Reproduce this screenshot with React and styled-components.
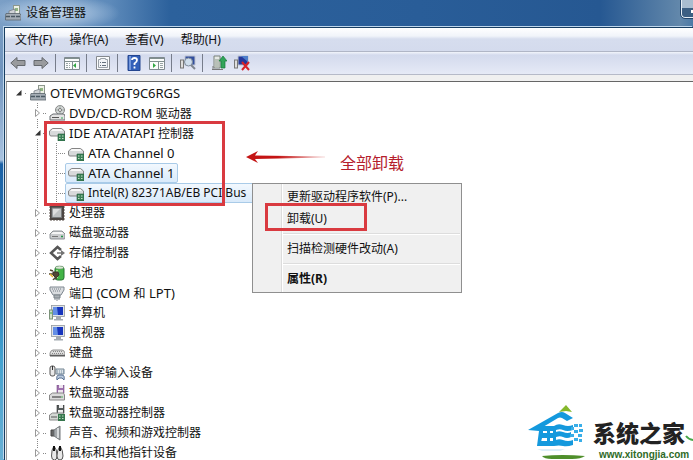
import React from "react";
import styled, { createGlobalStyle, css } from "styled-components";

const Global = createGlobalStyle`
  * { box-sizing: border-box; }
  body { margin: 0; overflow: hidden; }
  body, button { font: 12px/20px "Noto Sans", "Noto Sans CJK SC", sans-serif; color: #111; }
  button { background: none; border: 0; padding: 0; text-align: left; white-space: nowrap; }
`;
const Desktop = styled.div`
  position: relative;
  height: 100vh;
  overflow: hidden;
  display: flex;
  flex-direction: column;
  padding-left: 4px;
  background: linear-gradient(180deg, #7fa3c8 0, #6f93bd 70px, #a9c3e0 160px, #1c62a6 164px, #2f87c0 300px, #45a3d0 360px, #6ab0d4 100%);
`;
const TitleBar = styled.header`
  height: 27px;
  flex: none;
  margin-left: -4px;
  padding: 0 0 1px 5px;
  display: flex;
  align-items: center;
  gap: 5px;
  background:
    radial-gradient(ellipse 65px 18px at 55px 13px, rgba(225, 236, 247, .75), rgba(190, 212, 235, .45) 60%, transparent),
    linear-gradient(90deg, #7b9fc6 0, #5d8aba 110px, #2c619c 170px, #295d98 420px, #265892 600px, #6388ab 680px, #4c7aa6 100%);
`;
const Title = styled.h1`margin: 0; font-size: 12px; font-weight: 400; line-height: 20px;`;
const Minimize = styled.button`
  width: 12px;
  height: 18px;
  margin: 0 0 0 auto;
  align-self: flex-start;
  border: solid #e6eef5;
  border-width: 0 0 1px 1px;
  border-radius: 0 0 0 4px;
  outline: 1px solid #24466b;
  background: linear-gradient(#a9bdd0 0 8px, #3c5f83 8px);
  &::after { content: ""; display: block; width: 2px; height: 3px; margin: 5px 0 0 9px; background: #fff; }
`;
const Window = styled.main`
  flex: 1;
  min-height: 0;
  display: flex;
  flex-direction: column;
  border-left: 1px solid #173d61;
  border-top: 1px solid #173d61;
  box-shadow: -1px -1px #bfd7ec;
  background: #f0f0f0;
`;
const MenuBar = styled.nav`
  height: 24px;
  flex: none;
  display: flex;
  align-items: center;
  gap: 17px;
  padding-left: 10px;
  background: linear-gradient(#fff 0, #f1f4fa 8px, #d6ddee 11px, #d4dbed 100%);
  border-bottom: 1px solid #b0b6c6;
`;
const ToolBar = styled.div`
  height: 23px;
  flex: none;
  display: flex;
  align-items: center;
  padding-left: 5px;
  background: linear-gradient(#f2f5fb 0, #d3daed 3px, #dfe4f3 70%, #e6eaf6);
  border-bottom: 1px solid #b6bac8;
  svg { display: block; }
`;
const Tool = styled.button`width: 16px; height: 16px; margin-right: ${(p) => p.$gap || 0}px;`;
const Divider = styled.span`width: 1px; height: 18px; background: #777d8b; margin-right: 8px;`;
const Pane = styled.section`
  flex: 1;
  min-height: 0;
  overflow: hidden;
  margin: 6px 0 0 1px;
  border-top: 1px solid #666;
  border-left: 1px solid #999;
  background: #fff;
`;
const Tree = styled.ul`list-style: none; margin: 0; padding: 0;`;
const RootTree = styled(Tree)`padding-top: 1px;`;
const Dots = css`background-image: linear-gradient(#888 1px, transparent 1px); background-size: 1px 2px; background-repeat: repeat-y;`;
const Branch = styled(Tree)`
  ${Dots}
  background-position: ${(p) => p.$line}px 0;
`;
const Row = styled.li`
  height: 20px;
  display: flex;
  align-items: center;
  padding-left: ${(p) => p.$pad}px;
`;
const Twisty = styled.button`
  width: 8px;
  height: 10px;
  flex: none;
  background: #fff;
  margin-right: ${(p) => p.$gap}px;
  svg { display: block; }
`;
const Stub = styled.span`
  width: ${(p) => p.$w}px;
  height: 1px;
  flex: none;
  background: repeating-linear-gradient(90deg, #888 0 1px, transparent 1px 2px);
`;
const Latin = styled.span`font-size: 13px;`;
const Label = styled.span`
  height: 20px;
  display: flex;
  align-items: center;
  gap: 4px;
  padding: 0 ${(p) => (p.$long ? 24 : 2)}px 0 2px;
  line-height: 18px;
  white-space: nowrap;
  border: 1px solid ${(p) => (p.$selected ? "#a9cbe8" : "transparent")};
  border-radius: 2px;
  ${(p) => p.$selected && css`background: linear-gradient(#f2f8fe, #d9eafa);`}
  ${(p) => p.$long && css`${Latin} { font-size: 12px; }`}
  svg { flex: none; }
`;
const Mark = styled.div`
  position: absolute;
  border: 3px solid #d93a40;
  pointer-events: none;
`;
const TreeMark = styled(Mark)`left: 44px; top: 121px; width: 181px; height: 85px;`;
const MenuMark = styled(Mark)`left: 265px; top: 203px; width: 102px; height: 28px;`;
const Callout = styled.div`
  position: absolute;
  left: 245px;
  top: 150px;
  display: flex;
  gap: 13px;
  font: 16px/24px "Noto Sans CJK SC", sans-serif;
  color: #b5202c;
  svg { display: block; }
`;
const ContextMenu = styled.div`
  position: absolute;
  left: 252px;
  top: 183px;
  width: 210px;
  padding: 2px 1px;
  display: flex;
  flex-direction: column;
  background: linear-gradient(90deg, transparent 28px, #dcdcdc 28px 29px, #fff 29px 30px, transparent 30px), #f0f0f0;
  border: 1px solid #8f8f8f;
`;
const MenuItem = styled.button`
  height: 22px;
  padding-left: 33px;
  font-weight: ${(p) => (p.$strong ? 700 : 400)};
`;
const Rule = styled.hr`
  margin: 3px 0 3px 29px;
  border: 0;
  height: 2px;
  border-top: 1px solid #ddd;
  background: #fff;
`;
const Brand = styled.aside`
  position: absolute;
  left: 528px;
  top: 402px;
  width: 165px;
  height: 58px;
`;
const BrandName = styled.strong`
  position: absolute;
  left: 65px;
  top: 13px;
  font: 900 23px/34px "Noto Sans CJK SC", sans-serif;
  color: #222;
  white-space: nowrap;
`;
const BrandUrl = styled.span`
  position: absolute;
  left: 71px;
  top: 47px;
  font: 700 10px/11px "Liberation Sans", sans-serif;
  color: #2e6a27;
`;

const Disk = ({ y = 0 }) => (
  <g transform={`translate(0 ${y})`}>
    <path d="M1 6 4 3h9l3 3v4q0 1-1 1H2q-1 0-1-1Z" fill="#c9cbcd" stroke="#74797d" strokeWidth=".8" />
    <path d="M2 6 4 4h9l2 2Z" fill="#f5f5f5" />
    <path d="M3 8.5h6" stroke="#777" />
    <path d="M12 8.5h2" stroke="#239447" strokeWidth="1.4" />
  </g>
);
const Monitor = () => (
  <g>
    <rect x="2.5" y=".5" width="13" height="11" fill="#e1e4e8" stroke="#92989f" strokeWidth=".8" />
    <path d="M4 2h10v8H4Z" fill="#1735bd" />
    <path d="M4 2h4l1 8H4Z" fill="#638ee5" />
    <path d="M7 12h5v2h2v1.5H5V14h2Z" fill="#a4abb2" />
  </g>
);
const drawings = {
  root: <><rect x="8.5" y="0.5" width="6" height="9" fill="#edf1e6" stroke="#8d978d" /><path d="M10 3h3v3h-3" fill="#8fb582" /><path d="m4 6 6-2v5H4Z" fill="#cfd3d6" stroke="#777f86" strokeWidth=".8" /><path d="M1 8.5h14l1 2v4.5H.5v-4.5Z" fill="#a4adb5" stroke="#5b646d" strokeWidth=".8" /><path d="M1 11.5h14" stroke="#4a5963" strokeWidth="1.5" strokeDasharray="4 1" /></>,
  dvd: <><circle cx="11" cy="5" r="4.5" fill="#d4d8d7" stroke="#888" /><path d="M11 0v9M7 5h8" stroke="#a2aea8" /><circle cx="11" cy="5" r="1.5" fill="#fff" stroke="#777" /><path d="m1 11 3-2h11l1 2v4H1Z" fill="#e3e3e3" stroke="#696d70" /><path d="M3 12.5h7" stroke="#555" /><path d="M12 13h2" stroke="#35a556" /></>,
  ide: <><path d="m0.5 6 3-2.5h9L15.5 6v5H2Q.5 11 .5 9Z" fill="#d8dadb" stroke="#858585" /><path d="m2 6 2-2h8l2 2Z" fill="#f8f8f8" /><path d="M9 9h7v7H9Z" fill="#3b8057" stroke="#245d3b" strokeWidth=".6" /><path d="M10 11h1.5M13 11h1.5M10 13.5h1.5M13 13.5h1.5" stroke="#c2dfc5" strokeWidth="1.2" /></>,
  cpu: <><path d="M0 2h16M0 5h16M0 8h16M0 11h16M0 14h16M2 0v16M5 0v16M8 0v16M11 0v16M14 0v16" stroke="#5b514a" /><rect x="1" y="1" width="14" height="14" fill="#4c4542" /><rect x="3" y="3" width="9.5" height="9.5" fill="#bfc1c2" stroke="#77797a" /><path d="m4 4h7L4 11Z" fill="#dedede" /></>,
  disk: <Disk y={3} />,
  storage: <><path d="M12 5 8.5 2 2 8l6.5 6 3.5-3" fill="none" stroke="#565656" strokeWidth="2.5" /><path d="M8 8h5" stroke="#999" strokeWidth="2" /><path d="m12 5 4 3-4 3Z" fill="#737373" /></>,
  battery: <><rect x="6" y="1.5" width="9" height="13.5" rx="2.5" fill="#42b446" stroke="#247330" /><ellipse cx="10.5" cy="2.5" rx="4" ry="1.5" fill="#d8ecd1" stroke="#77917b" strokeWidth=".6" /><path d="M8 5v8" stroke="#a6e48b" strokeWidth="2" /><path d="m4 7 5 0 1 3-3 3-3-3Z" fill="#514735" stroke="#3d3529" /><path d="M0 9h4M4 6 1 5M8 13q-3 0-4 2" fill="none" stroke="#514735" strokeWidth="1.4" /><path d="m1 9 3 3" stroke="#e3b32f" strokeWidth="1.5" /></>,
  port: <><path d="M1 2h14v3l-3 5H4L1 5Z" fill="#d9dcdf" stroke="#7e8790" /><path d="M3 4h10M4 6h8" stroke="#777f87" strokeDasharray="1 1" /><path d="M5 10h6v3H5Z" fill="#aab0b5" stroke="#7b8389" /><path d="M8 13v3M6 13v2M10 13v2" stroke="#818990" /></>,
  pc: <><Monitor /><rect x=".5" y="5" width="3" height="9" fill="#d2dec9" stroke="#7b9279" /><path d="M2 7v2" stroke="#35a847" /></>,
  display: <Monitor />,
  keyboard: <><path d="M1 8q1-3 3-3h9q2 0 3 3v3H1Z" fill="#ddd" stroke="#777" strokeWidth=".8" /><path d="M4 6.5h9M3 8.5h11" stroke="#888" strokeDasharray="1 1" /><path d="M1 10.5h15" stroke="#5d5d5d" strokeWidth="1.5" /></>,
  hid: <><rect x="1" y="1" width="5" height="10" rx="2" fill="#e9e9e9" stroke="#555" /><path d="M3.5 1v4" stroke="#333" /><path d="M7 4h8v5H7Z" fill="#dce3e7" stroke="#738593" /><path d="M8 6h7M8 8h7" stroke="#7890a5" strokeDasharray="1 1" /><path d="M8 15q-1-5 2-5h3q3 0 2 5l-2-2h-3Z" fill="#b9c9dc" stroke="#566f91" /></>,
  floppy: <><path d="M8 0h7v8H8Z" fill="#9f70ae" stroke="#795186" strokeWidth=".6" /><path d="M10 0h4v3h-4M9 5h5v3H9" fill="#eee5ef" /><path d="m.5 10 3-2h11l1 2v5H.5Z" fill="#dadada" stroke="#888" /><path d="M3 12h9" stroke="#666" strokeWidth="1.5" /><path d="M12 12h2" stroke="#4cac59" /></>,
  floppyCtl: <><path d="M8 0h7v8H8Z" fill="#555b5b" stroke="#333" strokeWidth=".6" /><path d="M10 0h4v3h-4M9 5h5v3H9" fill="#eee" /><path d="m.5 10 3-2h11l1 2v5H.5Z" fill="#d4d8d4" stroke="#888" /><path d="M2 12h6" stroke="#555" /><path d="M9 9h7v7H9Z" fill="#37764d" /><path d="M10 11h1.5M13 11h1.5M10 13.5h1.5M13 13.5h1.5" stroke="#b9dbbd" strokeWidth="1.2" /></>,
  sound: <><path d="M2 5h3v6H2Z" fill="#666" stroke="#444" /><path d="m5 5 6-4v14l-6-4Z" fill="#a3a7aa" stroke="#75797c" /><path d="M9 3v10" stroke="#d8dbdd" strokeWidth="2" /></>,
  mouse: <><path d="M5 1Q2.5 4 2.5 11q0 4 3 4 2.5 0 2.5-4 0-7-3-10" fill="#e8e8e8" stroke="#555" /><path d="M11 1q3 4 3 10 0 4-3 4t-3-4q0-6 3-10" fill="#e8e8e8" stroke="#555" /><path d="M5 1v5M11 1v5" stroke="#111" strokeWidth="2" /></>,
  back: <path d="M0.8 8 7 2.5v3h8v5H7v3Z" fill="#999b9e" stroke="#65696e" />,
  forward: <path d="M15.2 8 9 2.5v3H1v5h8v3Z" fill="#999b9e" stroke="#65696e" />,
  tree: <><path d="M.5 2.5h15v12H.5Z" fill="#fbfcfc" stroke="#7f898f" /><path d="M1 3.5h14M1 6.5h14M8.5 7v7" stroke="#81908f" /><path d="M2 8.5h4M2 10.5h4M2 12.5h4" stroke="#99a5a5" strokeDasharray="2 1" /><path d="m12 8-3 2.5 3 2.5Z" fill="#32a743" /></>,
  props: <><path d="M1.5 1.5h13v13h-13Z" fill="#fbfcfd" stroke="#85898e" /><path d="M3.5 4.5h2v-1h5v1h2v8h-9Z" fill="#f2f4f7" stroke="#9aa1a8" /><path d="M5 7.5h1M7 7.5h4M5 10.5h1M7 10.5h4" stroke="#64707c" /></>,
  help: <><path d="M2 .5h12v15H2Z" fill="#3360b9" stroke="#24468f" /><path d="M3 1h2v14H3Z" fill="#7397dc" /><path d="M6 5q0-2 2.5-2T11 5q0 2-2.5 3.5V10M8.5 11.5v2" fill="none" stroke="#fff" strokeWidth="1.8" /></>,
  console: <><path d="M.5 2.5h15v12H.5Z" fill="#fbfcfc" stroke="#7f898f" /><path d="M1 3.5h14M1 6.5h14M9.5 7v7" stroke="#81908f" /><path d="M11 8.5h3M11 10.5h3M11 12.5h3" stroke="#99a5a5" /><path d="m4 8 3 2.5L4 13Z" fill="#32a743" /></>,
  scan: <><path d="M5 1h10v9H5Z" fill="#324f9e" stroke="#bec4d0" /><rect x=".5" y="5" width="3" height="8" fill="#ddd" stroke="#777" /><circle cx="8.5" cy="7" r="4" fill="#cfdeed" stroke="#7e8b9b" /><path d="m11 10 4 4" stroke="#7e858f" strokeWidth="2" /></>,
  update: <><path d="M3 1h6v12H3Z" fill="#e5e9e5" stroke="#7a827a" /><path d="M5 4v8M7 4v8" stroke="#8b978a" /><path d="M1 14.5h11M2 11v4" stroke="#777" /><path d="m12 1 4 5h-2v7h-4V6H8Z" fill="#31a45a" stroke="#177b3b" strokeWidth=".7" /></>,
  remove: <><path d="M4 1h10v9H4Z" fill="#25389b" stroke="#bcc4ce" /><path d="m7 1 7 6V1Z" fill="#4d7eca" /><rect x=".5" y="5" width="3" height="8" fill="#ddd" stroke="#777" /><path d="m8 7 7 8m0-8-7 8" stroke="#d72329" strokeWidth="2" /></>,
};
const Icon = ({ name }) => <svg width="16" height="16" viewBox="0 0 16 16" aria-hidden="true">{drawings[name]}</svg>;

const tools = [
  ["back", "后退", 7], ["forward", "前进", 6, true], ["tree", "显示控制台树", 6, true],
  ["props", "属性", 6, true], ["help", "帮助", 7], ["console", "操作窗格", 6, true],
  ["scan", "扫描检测硬件改动", 6, true], ["update", "更新驱动程序", 7], ["remove", "卸载", 0],
];
const devices = [
  ["dvd", "DVD/CD-ROM 驱动器"],
  ["ide", "IDE ATA/ATAPI 控制器", [["ATA Channel 0", false], ["ATA Channel 1", true], ["Intel(R) 82371AB/EB PCI Bus", true, true]]],
  ["cpu", "处理器"], ["disk", "磁盘驱动器"], ["storage", "存储控制器"], ["battery", "电池"],
  ["port", "端口 (COM 和 LPT)"], ["pc", "计算机"], ["display", "监视器"], ["keyboard", "键盘"],
  ["hid", "人体学输入设备"], ["floppy", "软盘驱动器"], ["floppyCtl", "软盘驱动器控制器"],
  ["sound", "声音、视频和游戏控制器"], ["mouse", "鼠标和其他指针设备"],
];
const MixedText = ({ text }) => (
  <span>
    {text.split(/([\x20-\x7e]+)/).filter(Boolean).map((run, i) =>
      /^[\x20-\x7e]/.test(run) ? <Latin key={i}>{run}</Latin> : run
    )}
  </span>
);
const Expander = ({ open, gap, name }) => (
  <Twisty $gap={gap} aria-label={name} aria-expanded={!!open}>
    <svg width="8" height="10" viewBox="0 0 8 10">
      {open ? <path d="M6.5 2v5.5H1Z" fill="#333" /> : <path d="m1.5 1.5 4 3.5-4 3.5Z" fill="#fff" stroke="#999" />}
    </svg>
  </Twisty>
);
const DeviceRow = ({ icon, label, open }) => (
  <Row $pad={27}>
    <Expander open={open} gap={1} name={label} />
    <Stub $w={3} />
    <Label><Icon name={icon} /><MixedText text={label} /></Label>
  </Row>
);

export default function App() {
  return (
    <Desktop>
      <Global />
      <TitleBar><Icon name="root" /><Title>设备管理器</Title><Minimize aria-label="最小化" /></TitleBar>
      <Window>
        <MenuBar>{["文件(F)", "操作(A)", "查看(V)", "帮助(H)"].map((t) => <button key={t}>{t}</button>)}</MenuBar>
        <ToolBar>
          {tools.map(([icon, name, gap, divider]) => (
            <React.Fragment key={icon}>
              <Tool $gap={gap} aria-label={name}><Icon name={icon} /></Tool>
              {divider && <Divider />}
            </React.Fragment>
          ))}
        </ToolBar>
        <Pane>
          <RootTree>
            <Row $pad={8}>
              <Expander open gap={2} name="计算机" />
              <Stub $w={2} />
              <Label><Icon name="root" /><MixedText text="OTEVMOMGT9C6RGS" /></Label>
            </Row>
            <li>
              <Branch $line={30}>
                {devices.map(([icon, label, children]) => (
                  <React.Fragment key={icon}>
                    <DeviceRow icon={icon} label={label} open={!!children} />
                    {children && (
                      <li>
                        <Branch $line={49}>
                          {children.map(([name, selected, long]) => (
                            <Row key={name} $pad={49}>
                              <Stub $w={9} />
                              <Label $selected={selected} $long={long}><Icon name="ide" /><MixedText text={name} /></Label>
                            </Row>
                          ))}
                        </Branch>
                      </li>
                    )}
                  </React.Fragment>
                ))}
              </Branch>
            </li>
          </RootTree>
        </Pane>
      </Window>
      <ContextMenu>
        <MenuItem>更新驱动程序软件(P)...</MenuItem>
        <MenuItem>卸载(U)</MenuItem>
        <Rule />
        <MenuItem>扫描检测硬件改动(A)</MenuItem>
        <Rule />
        <MenuItem $strong>属性(R)</MenuItem>
      </ContextMenu>
      <TreeMark />
      <MenuMark />
      <Callout>
        <svg width="82" height="14" viewBox="0 0 82 14" aria-hidden="true">
          <defs><linearGradient id="fade"><stop offset=".4" stopColor="#c41414" /><stop offset="1" stopColor="#c41414" stopOpacity=".15" /></linearGradient></defs>
          <path d="M1 7 13 1 10 5.5 80 6.5v1L10 9l3 4Z" fill="url(#fade)" />
        </svg>
        <span>全部卸载</span>
      </Callout>
      <Brand>
        <svg width="165" height="58" viewBox="0 0 165 58" aria-hidden="true">
          <path d="m31 10 7-7 6 7-6-1Z" fill="#85b82b" />
          <path d="M0 28 30 11q4-2 7 0l8 5-6 3-5-3q-2-1-4 0L15 25v7l-3 12H9l2-15Z" fill="#1499dd" />
          <path d="M14 24h12q4-3 9-1t10 0v5q-6 2-10 0t-9 1H14ZM14 31h12q4-3 9-1t8 0v5q-4 2-8 0t-9 1H14ZM12 39h14q4-3 9-1t10 0v5q-6 2-10 1t-9 0H11Z" fill="#1499dd" />
          <path d="M19 25h3v18h-3M25 25h3v18h-3" fill="#1499dd" />
          <path d="M46 22h4v3h-4M51 22h3v3h-3M43 25h3v3h-3M51 27h4v3h-4M46 28h4v3h-4M42 32h4v3h-4M50 32h4v3h-4M46 36h4v3h-4M51 37h3v3h-3" fill="#39aee8" />
          <path d="M9 47h28l-5 2H14Z" fill="#dceef8" />
          <path d="M14 54q20-2 43 0-4 3-13 3H24q-8 0-10-3Z" fill="#4f8f2b" />
          <path d="M158 34q3 4 8 4" fill="none" stroke="#45a748" strokeWidth="2" />
        </svg>
        <BrandName>系统之家</BrandName>
        <BrandUrl>www.xitongjia.com</BrandUrl>
      </Brand>
    </Desktop>
  );
}
